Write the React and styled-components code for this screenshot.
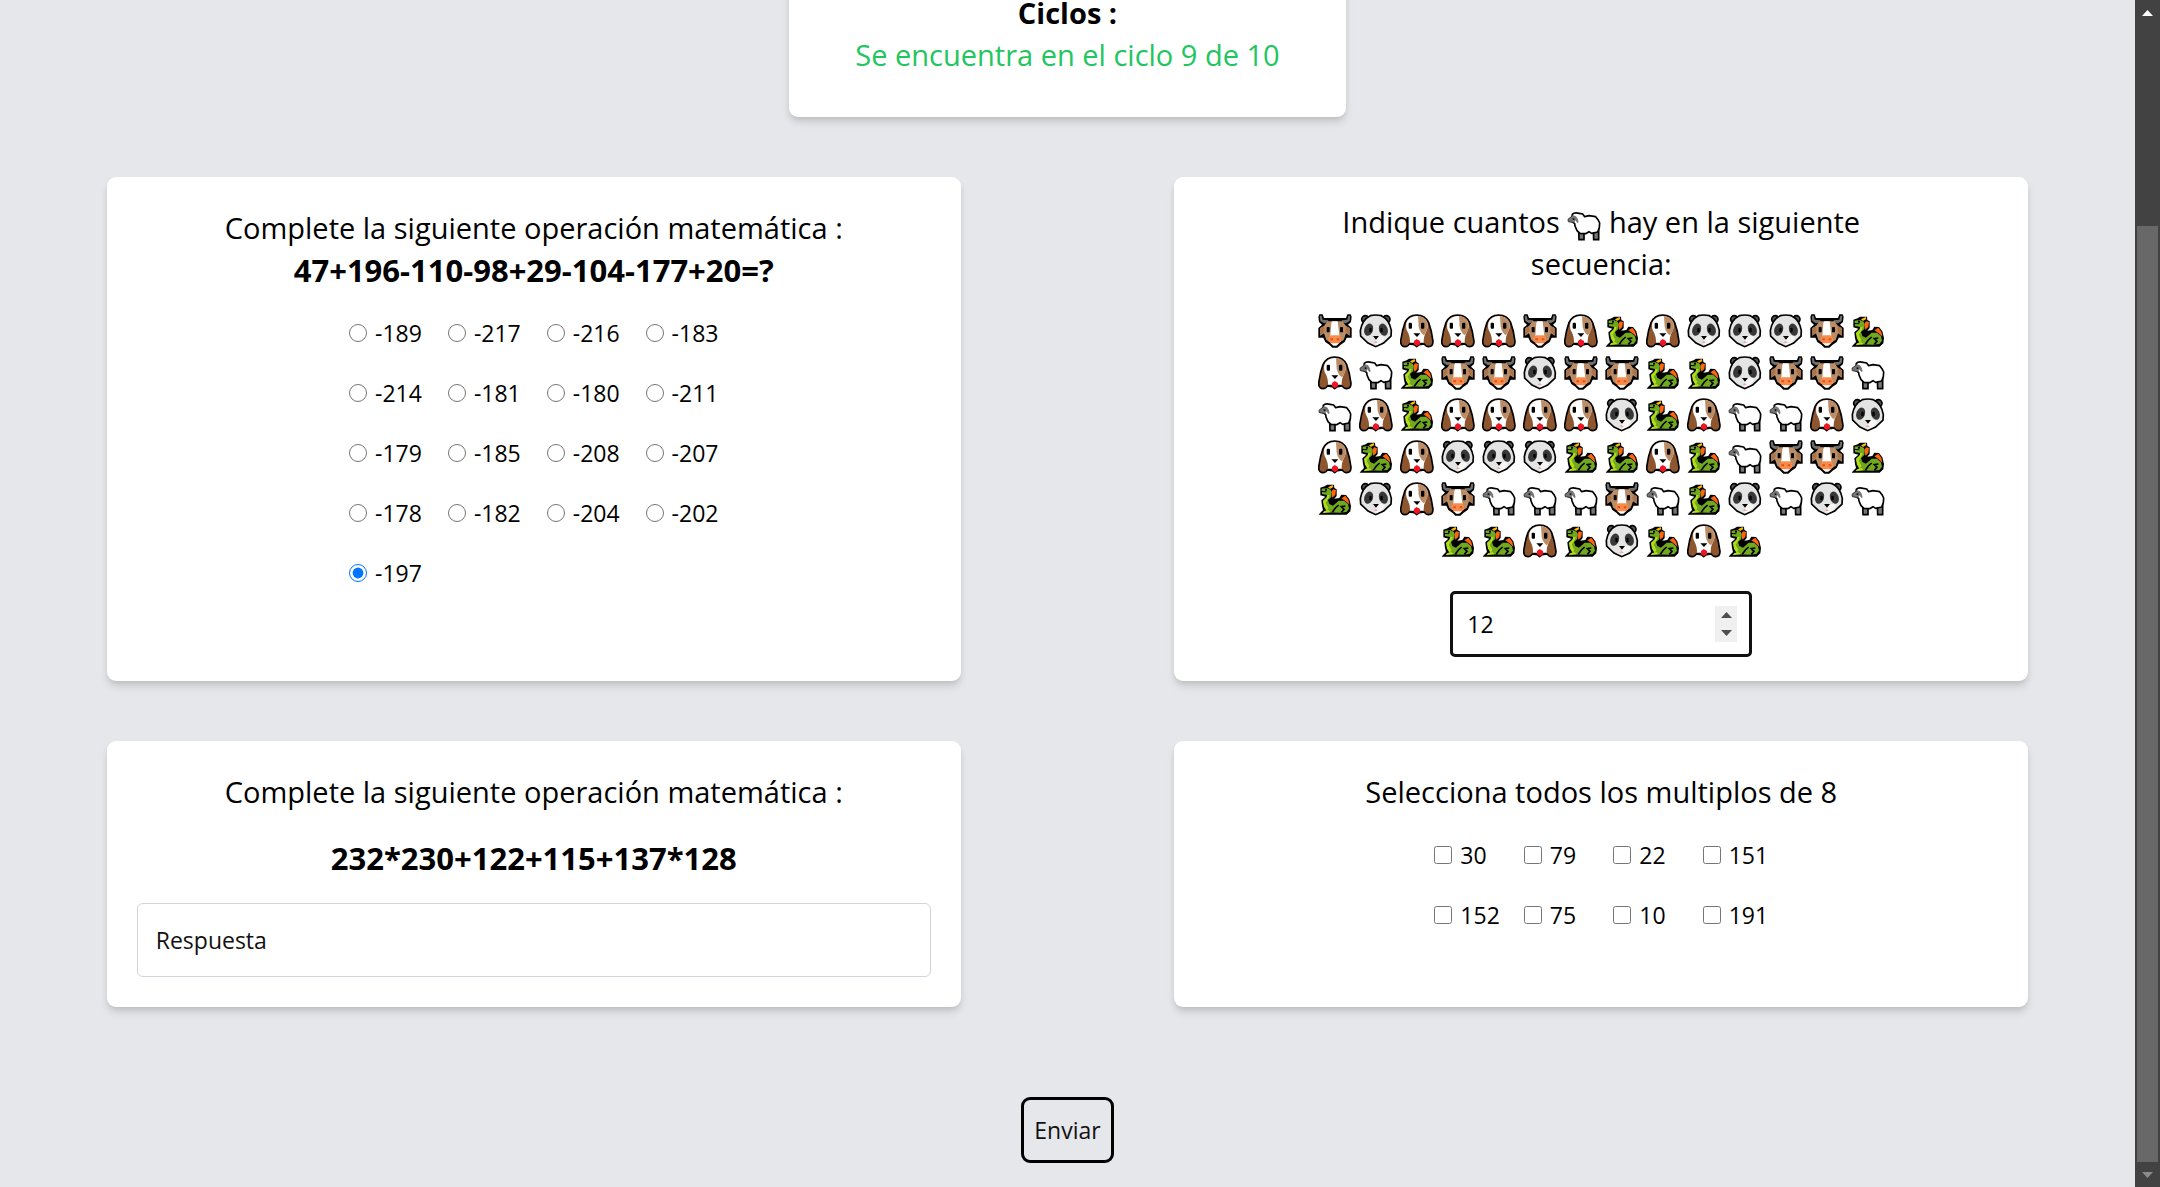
import React, { useState } from "react";
import styled, { createGlobalStyle } from "styled-components";

const GlobalStyle = createGlobalStyle`
  *, *::before, *::after { box-sizing: border-box; }
  body {
    margin: 0;
    background: #e5e7eb;
    color: #000;
    font-family: "Open Sans", "Noto Sans", sans-serif;
    font-size: 23px;
    line-height: 36px;
  }
  button, input { font: inherit; color: inherit; }
`;

const Window = styled.div`
  display: flex;
  height: 100vh;
  overflow: hidden;
`;

const Page = styled.main`
  flex: 1;
  min-width: 0;
  display: flex;
  flex-direction: column;
  justify-content: flex-end;
  padding-bottom: 24px;
`;

const Card = styled.section`
  display: flex;
  flex-direction: column;
  align-items: center;
  padding: ${(p) => (p.$compact ? "24px" : "30px")};
  border-radius: 9px;
  background: #fff;
  box-shadow: 0 6px 9px -1px rgba(0, 0, 0, 0.12), 0 3px 6px -2px rgba(0, 0, 0, 0.1);
`;

const CycleCard = styled(Card)`
  align-self: center;
  flex-shrink: 0;
  padding: 41px 66px;
  margin-bottom: 60px;
`;

const Board = styled.form`
  display: flex;
  flex-direction: column;
  flex-shrink: 0;
  align-items: center;
  gap: 90px;
`;

const Cards = styled.div`
  width: 100%;
  display: grid;
  grid-template-columns: 40% 40%;
  justify-content: space-around;
  gap: 60px 0;
`;

const Title = styled.h2`
  margin: 0;
  font-size: 29px;
  font-weight: ${(p) => (p.$strong ? 700 : 400)};
  line-height: 42px;
  text-align: center;
`;

const Operation = styled.p`
  margin: ${(p) => (p.$spaced ? "24px 0 0" : "0")};
  font-size: 31px;
  font-weight: 700;
  line-height: 42px;
  text-align: center;
`;

const CycleText = styled.p`
  margin: 0;
  font-size: 29px;
  line-height: 42px;
  color: #22c55e;
`;

const Options = styled.div`
  display: grid;
  grid-template-columns: repeat(4, 1fr);
  gap: 24px ${(p) => (p.$wide ? "26px" : "24px")};
  margin-top: 24px;
`;

const Option = styled.label`
  display: flex;
  align-items: center;
  gap: 8px;
`;

const Tick = styled.input`
  width: 18px;
  height: 18px;
  margin: 0;
`;

const Answer = styled.input`
  width: 100%;
  height: 74px;
  margin-top: 24px;
  padding: 0 18px;
  border: 1px solid #d1d5db;
  border-radius: 6px;
  background: #fff;
  &::placeholder { color: #111; opacity: 1; }
  &:focus { outline: none; }
`;

const Narrow = styled.div`
  width: 74%;
  display: flex;
  flex-direction: column;
  align-items: center;
`;

const Sequence = styled.div`
  display: flex;
  flex-wrap: wrap;
  justify-content: center;
  margin-top: 24px;
`;

const Cell = styled.span`
  display: flex;
  align-items: flex-end;
  justify-content: center;
  width: 41px;
  height: 42px;
  padding-bottom: 3px;
`;

const Glyph = styled.svg`
  width: 34px;
  height: 34px;
  flex-shrink: 0;
  vertical-align: -8px;
`;

const NumberBox = styled.div`
  display: flex;
  align-items: center;
  width: 302px;
  height: 66px;
  margin-top: 30px;
  padding: 0 12px 0 14px;
  border: 3px solid #101010;
  border-radius: 5px;
  background: #fff;
`;

const NumberField = styled.input`
  flex: 1;
  min-width: 0;
  padding: 0;
  border: 0;
  background: transparent;
  appearance: textfield;
  &::-webkit-inner-spin-button { display: none; }
  &:focus { outline: none; }
`;

const Spinner = styled.div`
  display: flex;
  flex-direction: column;
  width: 22px;
  height: 36px;
  background: #f0f0f0;
`;

const Step = styled.button`
  flex: 1;
  display: flex;
  align-items: center;
  justify-content: center;
  padding: 0;
  border: 0;
  background: transparent;
  color: #505050;
`;

const Send = styled.button`
  height: 66px;
  padding: 0 10px;
  border: 3px solid #000;
  border-radius: 9px;
  background: transparent;
  color: #111;
`;

const Rail = styled.div`
  display: flex;
  flex-direction: column;
  width: 25px;
  background: #424242;
`;

const RailButton = styled.button`
  display: flex;
  align-items: center;
  justify-content: center;
  height: 25px;
  padding: 0;
  border: 0;
  background: transparent;
  color: ${(p) => (p.$dim ? "#8b8b8b" : "#fff")};
`;

const Track = styled.div`
  flex: 1;
  display: flex;
  flex-direction: column;
  justify-content: flex-end;
  padding: 0 2px;
`;

const Thumb = styled.div`
  height: 82.3%;
  background: #686868;
`;

const Arrow = ({ down }) => (
  <svg width="11" height="6" viewBox="0 0 11 6" aria-hidden="true">
    <path d={down ? "M0 0H11L5.5 6Z" : "M0 6H11L5.5 0Z"} fill="currentColor" />
  </svg>
);

const Cow = () => (
  <>
    <path d="M4 1 H14 L18 12 H84 L88 1 H98 L101 8 L99 24 L90 32 L101 42 V71 H86 L80 84 L68 92 L58 101 H43 L34 92 L22 84 L16 71 H1 V42 L12 32 L3 24 L1 8 Z" fill="#000" />
    <path d="M5 5 L11 5 L14 17 L31 19 L30 25 L18 28 L7 21 Z M97 5 L91 5 L88 17 L71 19 L72 25 L84 28 L95 21 Z" fill="#6f6f6f" />
    <path d="M28 22 H74 L84 36 L96 43 L95 65 L84 58 L77 78 L66 84 H36 L25 78 L18 58 L7 65 L6 43 L18 36 Z" fill="#bb8d67" />
    <path d="M6 43 L18 36 L20 50 L7 65 Z M96 43 L84 36 L82 50 L95 65 Z" fill="#a9744a" />
    <path d="M42 22 H59 L64 66 H37 L40 28 Z" fill="#fff" />
    <path d="M36 86 H65 L55 95 H46 Z" fill="#fff" />
    <path d="M39 64 H62 L69 71 V82 L63 88 H38 L32 82 V71 Z" fill="#fb8b4b" />
    <path d="M37 73 h8 v6 h-8 z M56 73 h8 v6 h-8 z" fill="#d9541e" />
    <rect x="26" y="39" width="9" height="16" rx="2" />
    <rect x="66" y="39" width="9" height="16" rx="2" />
  </>
);

const Panda = () => (
  <>
    <circle cx="19" cy="16" r="11" fill="#555" stroke="#000" strokeWidth="5" />
    <circle cx="82" cy="16" r="11" fill="#555" stroke="#000" strokeWidth="5" />
    <path d="M34 5 Q50 1 67 5 Q92 17 97 50 L96 66 L74 87 L50 98 L27 87 L5 66 L4 50 Q9 17 34 5 Z" fill="#e4e4e4" stroke="#000" strokeWidth="5" />
    <path d="M50 66 L72 66 L78 72 L68 86 L50 94 Z" fill="#f6f6f6" />
    <ellipse cx="29" cy="47" rx="13" ry="19" transform="rotate(18 29 47)" fill="#383838" />
    <ellipse cx="73" cy="47" rx="13" ry="19" transform="rotate(-18 73 47)" fill="#383838" />
    <rect x="31" y="41" width="7" height="14" rx="3" />
    <rect x="64" y="41" width="7" height="14" rx="3" />
    <path d="M42 66 H60 L51 77 Z" />
    <path d="M50 80 L57 87 H44 Z" fill="#f4a9a0" />
  </>
);

const Dog = () => (
  <>
    <path d="M15 26 Q25 3 50 3 Q76 3 86 26 Q95 50 99 82 Q99 98 86 98 Q77 98 73 90 L58 92 L50 98 L43 92 L28 90 Q24 98 15 98 Q2 98 2 82 Q6 50 15 26 Z" fill="#8e562e" stroke="#000" strokeWidth="5" strokeLinejoin="round" />
    <path d="M19 26 Q28 6 50 6 Q73 6 82 26 Q85 42 78 54 Q70 68 71 88 H30 Q31 68 23 54 Q16 42 19 26 Z" fill="#fff" />
    <path d="M54 6 Q74 8 82 26 Q85 42 78 54 L72 64 Q60 56 56 38 Z" fill="#bb8d67" />
    <rect x="26" y="26" width="10" height="18" rx="3" />
    <rect x="63" y="26" width="10" height="18" rx="3" />
    <path d="M40 58 H61 L51 69 Z" />
    <path d="M30 89 H43 M59 89 H71" stroke="#000" strokeWidth="5" />
    <path d="M42 81 L50 75 L60 81 L60 91 L51 97 L42 91 Z" fill="#ef1525" />
  </>
);

const Sheep = () => (
  <>
    <path d="M35 68 H51 V98 H36 Z M79 66 H95 V98 H80 Z" fill="#777" stroke="#000" strokeWidth="5" />
    <path d="M16 22 Q22 15 37 19 L47 21 L53 29 L66 26 L86 29 L93 38 L98 48 L97 62 L92 75 L74 79 L66 74 L56 80 L39 79 L30 71 L24 57 L23 50 L14 43 Z" fill="#fff" stroke="#000" strokeWidth="5" strokeLinejoin="round" />
    <path d="M18 25 L3 37 L4 44 L22 47 L25 40 L31 48 L35 46 L32 35 L27 28 Z" fill="#777" />
    <path d="M18 25 L3 37 L4 44 L22 47" fill="none" stroke="#333" strokeWidth="3" />
    <rect x="17" y="34" width="5" height="5" fill="#111" />
  </>
);

const Dragon = () => (
  <>
    <path d="M7 17 L20 13 L27 8 L48 8 L49 18 L56 22 L56 42 L49 50 L64 48 L70 38 L84 39 L94 52 L99 72 L97 88 L86 98 L2 98 L6 93 L15 84 L12 72 L10 55 L22 44 L7 40 Z" fill="#000" />
    <path d="M45 22 L54 24 L52 39 L43 47 L40 30 Z M70 49 L82 41 L91 53 L94 68 L82 57 Z" fill="#ff650f" />
    <path d="M30 16 L44 9 L46 15 L36 21 Z" fill="#ffba10" />
    <path d="M11 20 L27 18 L38 23 L41 31 L40 45 L30 54 L34 66 L45 71 L62 56 L78 56 L90 67 L93 80 L85 90 L65 92 L26 91 L23 83 L18 70 L15 57 L26 45 L28 39 L12 36 L12 30 L25 31 L25 28 L11 27 Z" fill="#70a91e" />
    <path d="M28 39 L26 47 L15 57 L18 74 L27 86 L31 77 L23 62 L32 48 L35 39 Z M18 88 L31 84 L38 91 L14 94 Z" fill="#b4dc1b" />
    <path d="M43 91 L52 78 L62 69 M70 91 L78 82 L70 74 L82 72" fill="none" stroke="#000" strokeWidth="5" />
    <rect x="21" y="20" width="6" height="6" />
  </>
);

const ANIMALS = { C: Cow, P: Panda, D: Dog, S: Sheep, G: Dragon };

const Animal = ({ kind }) => {
  const Drawing = ANIMALS[kind];
  return (
    <Glyph viewBox="0 0 102 102" aria-hidden="true">
      <Drawing />
    </Glyph>
  );
};

const SEQUENCE =
  "CPDDDCDGDPPPCG" +
  "DSGCCPCCGGPCCS" +
  "SDGDDDDPGDSSDP" +
  "DGDPPPGGDGSCCG" +
  "GPDCSSSCSGPSPS" +
  "GGDGPGDG";

const RESULTS = [
  -189, -217, -216, -183, -214, -181, -180, -211, -179, -185, -208, -207, -178,
  -182, -204, -202, -197,
];

const MULTIPLES = [30, 79, 22, 151, 152, 75, 10, 191];

export default function App() {
  const [result, setResult] = useState(-197);
  const [count, setCount] = useState(12);
  const [answer, setAnswer] = useState("");

  return (
    <Window>
      <GlobalStyle />
      <Page>
        <CycleCard>
          <Title $strong>Ciclos :</Title>
          <CycleText>Se encuentra en el ciclo 9 de 10</CycleText>
        </CycleCard>

        <Board onSubmit={(e) => e.preventDefault()}>
          <Cards>
            <Card>
              <Title>Complete la siguiente operación matemática :</Title>
              <Operation>47+196-110-98+29-104-177+20=?</Operation>
              <Options $wide>
                {RESULTS.map((n) => (
                  <Option key={n}>
                    <Tick
                      type="radio"
                      name="result"
                      checked={result === n}
                      onChange={() => setResult(n)}
                    />
                    {n}
                  </Option>
                ))}
              </Options>
            </Card>

            <Card $compact>
              <Narrow>
                <Title as="label" htmlFor="count">
                  Indique cuantos <Animal kind="S" /> hay en la siguiente secuencia:
                </Title>
                <Sequence>
                  {[...SEQUENCE].map((kind, i) => (
                    <Cell key={i}>
                      <Animal kind={kind} />
                    </Cell>
                  ))}
                </Sequence>
                <NumberBox>
                  <NumberField
                    id="count"
                    type="number"
                    value={count}
                    onChange={(e) => setCount(e.target.value)}
                  />
                  <Spinner>
                    <Step type="button" aria-label="Más" onClick={() => setCount(Number(count) + 1)}>
                      <Arrow />
                    </Step>
                    <Step type="button" aria-label="Menos" onClick={() => setCount(Number(count) - 1)}>
                      <Arrow down />
                    </Step>
                  </Spinner>
                </NumberBox>
              </Narrow>
            </Card>

            <Card>
              <Title as="label" htmlFor="answer">
                Complete la siguiente operación matemática :
              </Title>
              <Operation $spaced>232*230+122+115+137*128</Operation>
              <Answer
                id="answer"
                type="text"
                placeholder="Respuesta"
                value={answer}
                onChange={(e) => setAnswer(e.target.value)}
              />
            </Card>

            <Card>
              <Title>Selecciona todos los multiplos de 8</Title>
              <Options>
                {MULTIPLES.map((n) => (
                  <Option key={n}>
                    <Tick type="checkbox" name="multiples" value={n} />
                    {n}
                  </Option>
                ))}
              </Options>
            </Card>
          </Cards>

          <Send type="submit">Enviar</Send>
        </Board>
      </Page>

      <Rail>
        <RailButton type="button" aria-label="Subir">
          <Arrow />
        </RailButton>
        <Track>
          <Thumb />
        </Track>
        <RailButton type="button" aria-label="Bajar" $dim>
          <Arrow down />
        </RailButton>
      </Rail>
    </Window>
  );
}
